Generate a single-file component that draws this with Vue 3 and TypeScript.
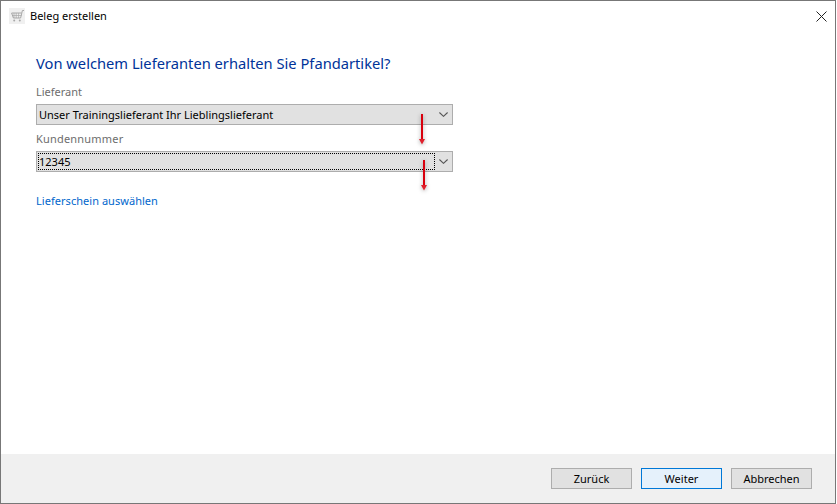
<script setup lang="ts">
const buttons: { label: string; primary?: boolean }[] = [
  { label: 'Zurück' },
  { label: 'Weiter', primary: true },
  { label: 'Abbrechen' },
]
const arrows = [
  { cls: 'arrow-a' },
  { cls: 'arrow-b' },
]
</script>

<template>
  <div class="window">
    <header class="titlebar">
      <span class="app-icon">
        <svg width="16" height="16" viewBox="0 0 16 16" fill="none" stroke="#a8a8a8" stroke-width="1">
          <path d="M15 2.5h-1.6L11.6 10H4.4L2.6 5h10" />
          <path d="M3.6 7.5h9M5 5v5M7.2 5v5M9.6 5v5" stroke-width="0.7" />
          <circle cx="5.2" cy="12.6" r="1" fill="#a8a8a8" stroke="none" />
          <circle cx="10.8" cy="12.6" r="1" fill="#a8a8a8" stroke="none" />
        </svg>
      </span>
      <span class="title">Beleg erstellen</span>
      <svg class="close" width="11" height="11" viewBox="0 0 11 11" stroke="#222" stroke-width="1" fill="none">
        <path d="M0.5 0.5l10 10M10.5 0.5l-10 10" />
      </svg>
    </header>

    <main class="content">
      <h1 class="heading">Von welchem Lieferanten erhalten Sie Pfandartikel?</h1>

      <label class="field-label">Lieferant</label>
      <div class="combo">
        <span class="combo-text">Unser Trainingslieferant Ihr Lieblingslieferant</span>
        <svg class="chevron" width="9" height="5" viewBox="0 0 9 5" fill="none" stroke="#555" stroke-width="1.1">
          <path d="M0.4 0.5l4.1 3.8 4.1-3.8" />
        </svg>
      </div>

      <label class="field-label second">Kundennummer</label>
      <div class="combo">
        <span class="combo-text focused">12345</span>
        <svg class="chevron" width="9" height="5" viewBox="0 0 9 5" fill="none" stroke="#555" stroke-width="1.1">
          <path d="M0.4 0.5l4.1 3.8 4.1-3.8" />
        </svg>
      </div>

      <a class="link">Lieferschein auswählen</a>
    </main>

    <footer class="footer">
      <button
        v-for="b in buttons"
        :key="b.label"
        class="btn"
        :class="{ primary: b.primary }"
      >{{ b.label }}</button>
    </footer>

    <svg
      v-for="a in arrows"
      :key="a.cls"
      class="arrow"
      :class="a.cls"
      width="9"
      height="36"
      viewBox="0 0 9 36"
    >
      <rect x="3" y="0" width="2" height="26" fill="#d9000d" />
      <path d="M1 25h6L4 30.5z" fill="#e0202c" />
    </svg>
  </div>
</template>

<style>
html, body { margin: 0; padding: 0; background: #fff; }
</style>

<style scoped>
.window {
  position: relative;
  box-sizing: border-box;
  width: 836px;
  height: 504px;
  border: 1px solid #777;
  background: #fff;
  display: flex;
  flex-direction: column;
  font-family: "Noto Sans", "Open Sans", sans-serif;
  font-size: 11px;
  color: #000;
  overflow: hidden;
}
.titlebar {
  display: flex;
  align-items: center;
  height: 30px;
  flex: none;
  padding: 0 8px 0 8px;
}
.app-icon {
  width: 16px;
  height: 16px;
  display: flex;
  margin-right: 5px;
  background: #f0f0f0;
}
.title { flex: 1; font-size: 11px; padding-bottom: 2px; }
.close { flex: none; }
.content {
  flex: 1;
  display: flex;
  flex-direction: column;
  align-items: flex-start;
  padding: 21px 0 0 35px;
}
.heading {
  margin: 0;
  font-size: 14.7px;
  line-height: 22px;
  font-weight: 400;
  color: #003399;
}
.field-label {
  margin-top: 9px;
  line-height: 17px;
  color: #6d6d6d;
}
.field-label.second { margin-top: 5px; letter-spacing: 0.2px; }
.combo {
  box-sizing: border-box;
  width: 417px;
  height: 21px;
  margin-top: 4px;
  border: 1px solid #adadad;
  background: #e1e1e1;
  display: flex;
  align-items: center;
  padding: 1px 4px 1px 1px;
}
.combo-text {
  flex: 1;
  align-self: stretch;
  display: flex;
  align-items: center;
  padding-left: 0;
  border: 1px solid transparent;
  margin-right: 4px;
  white-space: nowrap;
}
.combo-text.focused { border: 1px dotted #000; }
.chevron { flex: none; margin-right: 0; }
.link {
  margin-top: 20px;
  line-height: 17px;
  color: #0066cc;
  letter-spacing: 0.04px;
}
.footer {
  flex: none;
  height: 49px;
  background: #f0f0f0;
  display: flex;
  justify-content: flex-end;
  align-items: flex-start;
  gap: 9px;
  padding: 14px 23px 0 0;
  box-sizing: border-box;
}
.btn {
  box-sizing: border-box;
  width: 81px;
  height: 21px;
  padding: 0;
  border: 1px solid #adadad;
  background: #e1e1e1;
  font: inherit;
  color: #000;
}
.btn.primary {
  border-color: #0078d7;
  background: #e5f1fb;
}
.arrow { position: absolute; filter: drop-shadow(0 1px 2px rgba(0, 0, 0, 0.35)); }
.arrow-a { left: 417px; top: 113px; }
.arrow-b { left: 419px; top: 159px; }
</style>
